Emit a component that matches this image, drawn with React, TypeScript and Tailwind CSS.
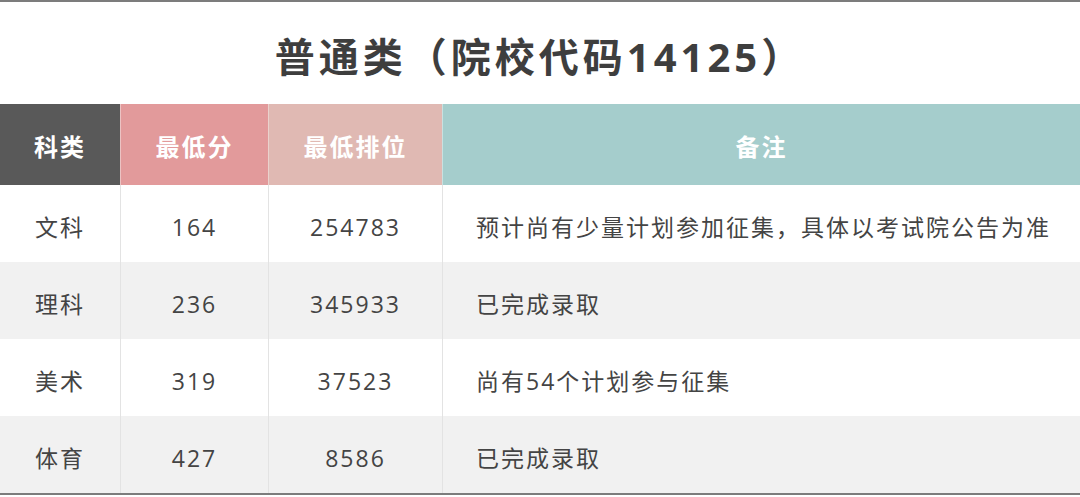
import React from "react";

// Admission cutoff table: title band, coloured header row, zebra body rows.

const rows = [
  { kind: "文科", score: "164", rank: "254783", note: "预计尚有少量计划参加征集，具体以考试院公告为准" },
  { kind: "理科", score: "236", rank: "345933", note: "已完成录取" },
  { kind: "美术", score: "319", rank: "37523", note: "尚有54个计划参与征集" },
  { kind: "体育", score: "427", rank: "8586", note: "已完成录取" },
];

const font = { fontFamily: '"Open Sans", "Noto Sans CJK SC", sans-serif' };

export default function App() {
  return (
    <div className="w-[1080px] h-[497px] bg-white" style={font}>
      <div className="border-t-2 border-b-2 border-[#7c7c7c]">
        <div className="h-[102px] flex items-center justify-center">
          <h1 className="text-[40px] font-bold text-[#3e3e3e] tracking-[4px] pt-[8px]">普通类（院校代码14125）</h1>
        </div>

        <div className="grid grid-cols-[120px_148px_174px_1fr] h-[81px] text-white font-bold text-[24px] tracking-[2px]">
          <div className="bg-[#595959] flex items-center justify-center pt-[5px]">科类</div>
          <div className="bg-[#e29a9b] flex items-center justify-center pt-[5px] border-l border-[#ecc3c3]">最低分</div>
          <div className="bg-[#e0b9b3] flex items-center justify-center pt-[5px] border-l border-[#ead2cd]">最低排位</div>
          <div className="bg-[#a5cdcc] flex items-center justify-center pt-[5px] border-l border-[#c9e1e0]">备注</div>
        </div>

        {rows.map((r, i) => (
          <div
            key={r.kind}
            className={`grid grid-cols-[120px_148px_174px_1fr] h-[77px] text-[23px] text-[#444444] tracking-[2px] ${i % 2 ? "bg-[#f1f1f1]" : "bg-white"}`}
          >
            <div className="flex items-center justify-center pt-[7px]">{r.kind}</div>
            <div className="flex items-center justify-center pt-[7px] border-l border-[#e3e3e3]">{r.score}</div>
            <div className="flex items-center justify-center pt-[7px] border-l border-[#e3e3e3]">{r.rank}</div>
            <div className="flex items-center pl-[33px] pt-[7px] border-l border-[#e3e3e3]">{r.note}</div>
          </div>
        ))}
      </div>
    </div>
  );
}
